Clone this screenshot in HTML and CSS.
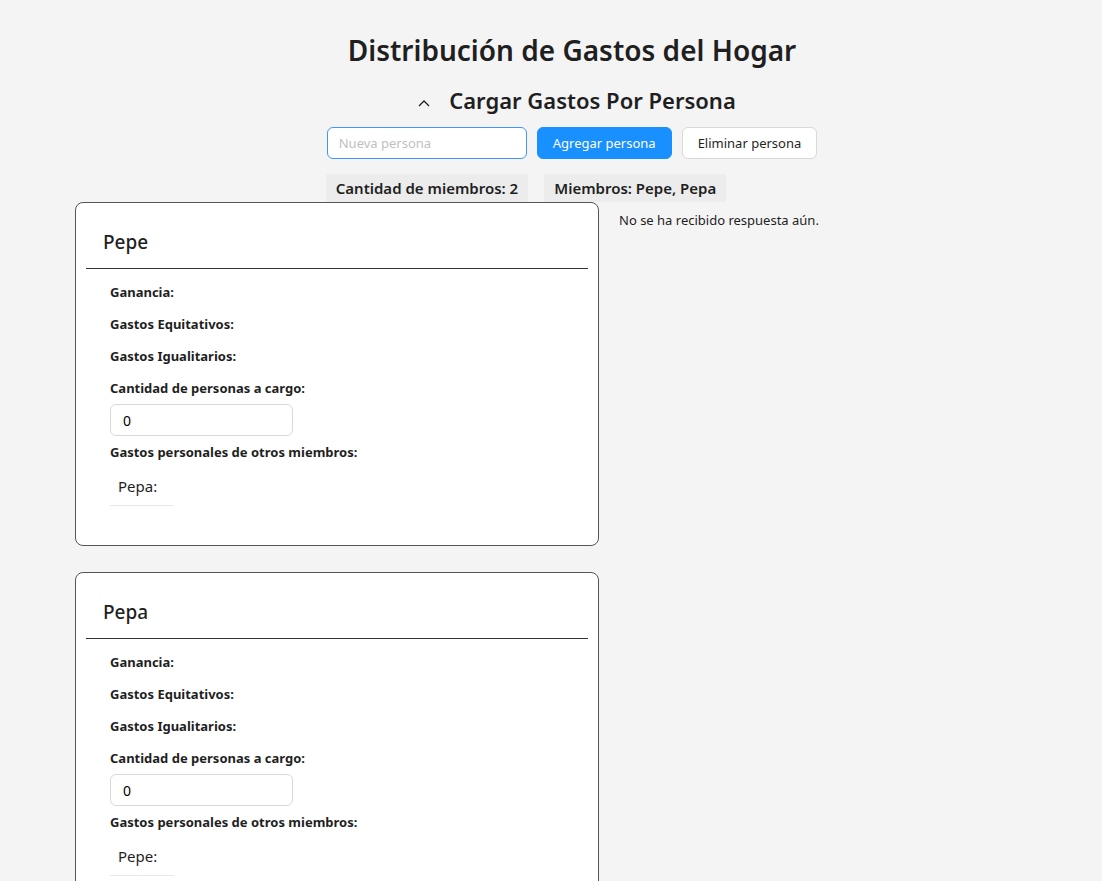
FILE: index.html
```html
<!DOCTYPE html>
<html lang="es">
<head>
<meta charset="utf-8">
<title>Distribución de Gastos del Hogar</title>
<link rel="stylesheet" href="styles.css">
</head>
<body>
<div class="page">
  <h1 class="title">Distribución de Gastos del Hogar</h1>
  <div class="section-head">
    <svg class="chev" width="12" height="8" viewBox="0 0 12 8"><polyline points="1,7 6,2 11,7" fill="none" stroke="#222" stroke-width="1.3"/></svg>
    <h2 class="subtitle">Cargar Gastos Por Persona</h2>
  </div>
  <div class="controls">
    <input class="name-input" type="text" placeholder="Nueva persona">
    <button class="btn btn-primary">Agregar persona</button>
    <button class="btn btn-default">Eliminar persona</button>
  </div>
  <div class="badges">
    <span class="badge">Cantidad de miembros: 2</span>
    <span class="badge">Miembros: Pepe, Pepa</span>
  </div>
</div>
<div class="content">
  <div class="cards">
    <div class="card">
      <div class="card-head">Pepe</div>
      <div class="card-body">
        <div class="label">Ganancia:</div>
        <div class="label">Gastos Equitativos:</div>
        <div class="label">Gastos Igualitarios:</div>
        <div class="label">Cantidad de personas a cargo:</div>
        <input class="num-input" type="text" value="0">
        <div class="label">Gastos personales de otros miembros:</div>
        <div class="other">Pepa:</div>
      </div>
    </div>
    <div class="card">
      <div class="card-head">Pepa</div>
      <div class="card-body">
        <div class="label">Ganancia:</div>
        <div class="label">Gastos Equitativos:</div>
        <div class="label">Gastos Igualitarios:</div>
        <div class="label">Cantidad de personas a cargo:</div>
        <input class="num-input" type="text" value="0">
        <div class="label">Gastos personales de otros miembros:</div>
        <div class="other">Pepe:</div>
      </div>
    </div>
  </div>
  <div class="response">No se ha recibido respuesta aún.</div>
</div>
</body>
</html>
```

FILE: styles.css
```css
* { box-sizing: border-box; }
html, body { margin: 0; padding: 0; }
body {
  background: #f4f4f4;
  font-family: "Noto Sans", "Open Sans", sans-serif;
  color: #1f1f1f;
}
.page {
  margin: 0 33px 0 75px;
  display: flex;
  flex-direction: column;
  align-items: center;
  padding-top: 30px;
}
.title {
  margin: 0;
  font-size: 28px;
  font-weight: 600;
  line-height: 40px;
}
.section-head {
  display: flex;
  align-items: center;
  gap: 19px;
  margin-top: 15px;
  margin-left: 10px;
}
.chev { margin-top: 6px; }
.subtitle {
  margin: 0;
  font-size: 22px;
  font-weight: 600;
  line-height: 30px;
}
.controls {
  display: flex;
  gap: 10px;
  margin-top: 12px;
}
.name-input {
  width: 200px;
  height: 32px;
  border: 1px solid #4096ff;
  border-radius: 6px;
  padding: 4px 11px;
  font: inherit;
  font-size: 13px;
  background: #fff;
  outline: none;
}
.name-input::placeholder { color: #bfbfbf; }
.btn {
  height: 32px;
  padding: 0 15px;
  border-radius: 6px;
  font: inherit;
  font-size: 13px;
}
.btn-primary {
  background: #1890ff;
  border: 1px solid #1890ff;
  color: #fff;
}
.btn-default {
  background: #fff;
  border: 1px solid #d9d9d9;
  color: #1f1f1f;
}
.badges {
  display: flex;
  gap: 16px;
  margin-top: 15px;
  margin-right: 92px;
}
.badge {
  background: #ececec;
  padding: 4px 10px;
  font-size: 15px;
  font-weight: 600;
  line-height: 20px;
  border-radius: 3px;
}
.content {
  display: flex;
  align-items: flex-start;
  gap: 20px;
  margin-left: 75px;
}
.cards {
  display: flex;
  flex-direction: column;
  gap: 26px;
}
.card {
  width: 524px;
  background: #fff;
  border: 1px solid #555;
  border-radius: 8px;
  padding: 0 10px 39px;
}
.card-head {
  font-size: 19px;
  font-weight: 500;
  padding: 26px 17px 0;
  height: 66px;
  border-bottom: 1px solid #333;
}
.card-body {
  padding: 13px 24px 0;
  display: flex;
  flex-direction: column;
  align-items: flex-start;
}
.label {
  font-size: 13px;
  font-weight: 700;
  line-height: 20px;
  margin-bottom: 12px;
}
.num-input {
  width: 183px;
  height: 32px;
  border: 1px solid #d9d9d9;
  border-radius: 6px;
  padding: 4px 12px;
  font: inherit;
  font-size: 14px;
  margin-top: -6px;
  margin-bottom: 6px;
  background: #fff;
}
.other {
  width: 64px;
  font-size: 15px;
  padding: 8px 8px 9px;
  border-bottom: 1px solid #e8e8e8;
  margin-top: -6px;
}
.response {
  font-size: 13px;
  margin-top: 9px;
}
```
